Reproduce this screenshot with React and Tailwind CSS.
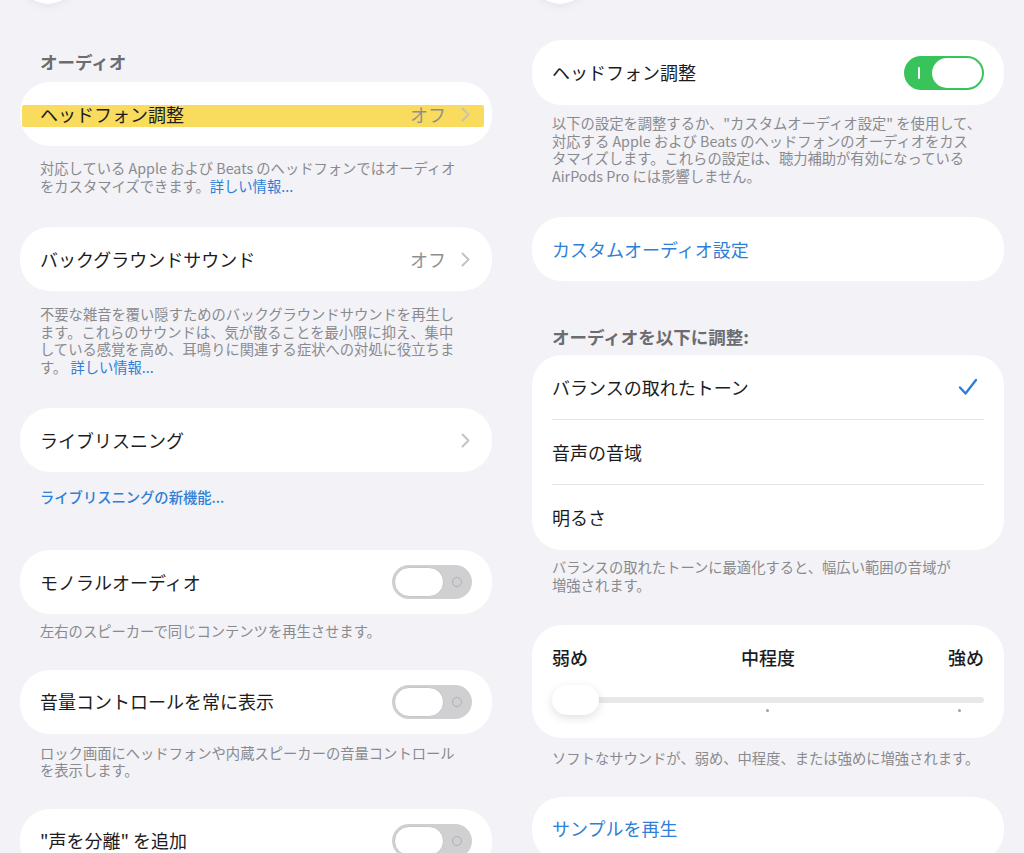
import React from 'react';

// iOS style settings, two screens side by side

const Chevron = () => (
  <svg width="9" height="15" viewBox="0 0 9 15" fill="none" className="shrink-0">
    <path d="M1.5 1.5l6 6-6 6" stroke="#c3c3c7" strokeWidth="2" strokeLinecap="round" strokeLinejoin="round" />
  </svg>
);

const Toggle = ({ on }) => (
  <div
    className={`w-[80px] h-[34px] rounded-full p-[2px] flex items-center shrink-0 ${on ? 'bg-[#38c45a]' : 'bg-[#d0d0d3]'}`}
  >
    {on ? (
      <>
        <div className="flex-1 flex justify-center">
          <div className="w-[2px] h-[12px] bg-white rounded-full" />
        </div>
        <div className="w-[50px] h-[30px] rounded-full bg-white" />
      </>
    ) : (
      <>
        <div className="w-[50px] h-[30px] rounded-full bg-white border border-[#c6c6c9]" />
        <div className="flex-1 flex justify-center">
          <div className="w-[10px] h-[10px] rounded-full border-[1.5px] border-[#b0b0b3]" />
        </div>
      </>
    )}
  </div>
);

const Card = ({ className = '', children }) => (
  <div className={`bg-white rounded-[30px] shrink-0 ${className}`}>{children}</div>
);

const Row = ({ label, value, chevron, toggle, height = 'h-16', highlight }) => (
  <Card className={`relative flex items-center px-5 ${height}`}>
    {highlight && (
      <div className="absolute left-[2px] right-[8px] top-[23px] h-[22px] bg-[#f9db5e] rounded-[2px]" />
    )}
    <span className="relative flex-1 text-[18px] text-[#1c1c1e]">{label}</span>
    {value && <span className="relative text-[18px] text-[#8e8e93] mr-[15px]">{value}</span>}
    {chevron && (
      <span className="relative mr-[2px]">
        <Chevron />
      </span>
    )}
    {toggle !== undefined && <Toggle on={toggle} />}
  </Card>
);

const Note = ({ className = '', children }) => (
  <p className={`px-5 text-[14.3px] leading-[17.5px] text-[#8a8a8e] whitespace-nowrap shrink-0 ${className}`}>{children}</p>
);

const Link = ({ children }) => <span className="text-[#2f7fd8]">{children}</span>;

const TopButton = () => (
  <div className="w-[56px] h-[56px] shrink-0 -mt-[52px] rounded-full bg-white shadow-[0_2px_10px_rgba(0,0,0,0.06)]" />
);

const LeftScreen = () => (
  <div className="w-[472px] flex flex-col">
    <TopButton />
    <div className="mt-[46px] h-6 px-5 flex items-center text-[17.5px] font-semibold text-[#6c6c70]">オーディオ</div>

    <div className="mt-[8px]">
      <Row label="ヘッドフォン調整" value="オフ" chevron highlight />
    </div>
    <Note className="mt-[13px] leading-[18px]">
      対応している Apple および Beats のヘッドフォンではオーディオ
      <br />
      をカスタマイズできます。<Link>詳しい情報...</Link>
    </Note>

    <div className="mt-[32px]">
      <Row label="バックグラウンドサウンド" value="オフ" chevron />
    </div>
    <Note className="mt-[14px]">
      不要な雑音を覆い隠すためのバックグラウンドサウンドを再生し
      <br />
      ます。これらのサウンドは、気が散ることを最小限に抑え、集中
      <br />
      している感覚を高め、耳鳴りに関連する症状への対処に役立ちま
      <br />
      す。 <Link>詳しい情報...</Link>
    </Note>

    <div className="mt-[33px]">
      <Row label="ライブリスニング" chevron />
    </div>
    <p className="mt-[16px] px-5 h-[18px] text-[14.3px] leading-[18px] font-medium text-[#2f7fd8]">
      ライブリスニングの新機能...
    </p>

    <div className="mt-[44px]">
      <Row label="モノラルオーディオ" toggle={false} />
    </div>
    <Note className="mt-[8px]">左右のスピーカーで同じコンテンツを再生させます。</Note>

    <div className="mt-[30px]">
      <Row label="音量コントロールを常に表示" toggle={false} />
    </div>
    <Note className="mt-[10px]">
      ロック画面にヘッドフォンや内蔵スピーカーの音量コントロール
      <br />
      を表示します。
    </Note>

    <div className="mt-[30px]">
      <Row label={'"声を分離" を追加'} toggle={false} />
    </div>
  </div>
);

const Check = () => (
  <svg width="20" height="18" viewBox="0 0 20 18" fill="none">
    <path d="M2 9.5l5.5 6L18 2" stroke="#2f7fd8" strokeWidth="2.4" strokeLinecap="round" strokeLinejoin="round" />
  </svg>
);

const RightScreen = () => (
  <div className="w-[472px] flex flex-col">
    <TopButton />

    <div className="mt-[36px]">
      <Row label="ヘッドフォン調整" toggle={true} height="h-[65px]" />
    </div>
    <Note className="mt-[9px]">
      以下の設定を調整するか、"カスタムオーディオ設定" を使用して、
      <br />
      対応する Apple および Beats のヘッドフォンのオーディオをカス
      <br />
      タマイズします。これらの設定は、聴力補助が有効になっている
      <br />
      AirPods Pro には影響しません。
    </Note>

    <Card className="mt-[33px] h-16 px-5 flex items-center">
      <span className="text-[18px] text-[#2f7fd8]">カスタムオーディオ設定</span>
    </Card>

    <div className="mt-[44px] h-6 px-5 flex items-center text-[17.5px] font-semibold text-[#6c6c70]">
      オーディオを以下に調整:
    </div>

    <Card className="mt-[6px] flex flex-col">
      <div className="h-16 px-5 pr-[26px] flex items-center">
        <span className="flex-1 text-[18px] text-[#1c1c1e]">バランスの取れたトーン</span>
        <Check />
      </div>
      <div className="mx-5 h-px bg-[#e3e3e6]" />
      <div className="h-16 px-5 flex items-center">
        <span className="text-[18px] text-[#1c1c1e]">音声の音域</span>
      </div>
      <div className="mx-5 h-px bg-[#e3e3e6]" />
      <div className="h-[65px] px-5 flex items-center">
        <span className="text-[18px] text-[#1c1c1e]">明るさ</span>
      </div>
    </Card>
    <Note className="mt-[8px]">
      バランスの取れたトーンに最適化すると、幅広い範囲の音域が
      <br />
      増強されます。
    </Note>

    <Card className="mt-[32px] h-[113px] px-5 pt-5 flex flex-col">
      <div className="h-6 flex items-center justify-between text-[18px] font-medium text-[#1c1c1e]">
        <span>弱め</span>
        <span>中程度</span>
        <span>強め</span>
      </div>
      <div className="relative mt-4 h-[30px]">
        <div className="absolute left-0 right-0 top-[12px] h-[6px] rounded-full bg-[#e8e8eb]" />
        <div className="absolute left-[214px] top-[24px] w-[3px] h-[3px] rounded-full bg-[#a0a0a4]" />
        <div className="absolute left-[406px] top-[24px] w-[3px] h-[3px] rounded-full bg-[#a0a0a4]" />
        <div className="absolute left-0 top-0 w-[47px] h-[30px] rounded-full bg-white shadow-[0_3px_10px_rgba(0,0,0,0.12)]" />
      </div>
    </Card>
    <Note className="mt-[11px]">ソフトなサウンドが、弱め、中程度、または強めに増強されます。</Note>

    <Card className="mt-[30px] h-16 px-5 flex items-center">
      <span className="text-[18px] text-[#2f7fd8]">サンプルを再生</span>
    </Card>
  </div>
);

export default function App() {
  return (
    <div className="w-[1024px] h-[853px] overflow-hidden bg-[#f2f2f7] flex items-start gap-[40px] px-5 font-['Noto_Sans_CJK_JP','Noto_Sans',sans-serif]">
      <LeftScreen />
      <RightScreen />
    </div>
  );
}
